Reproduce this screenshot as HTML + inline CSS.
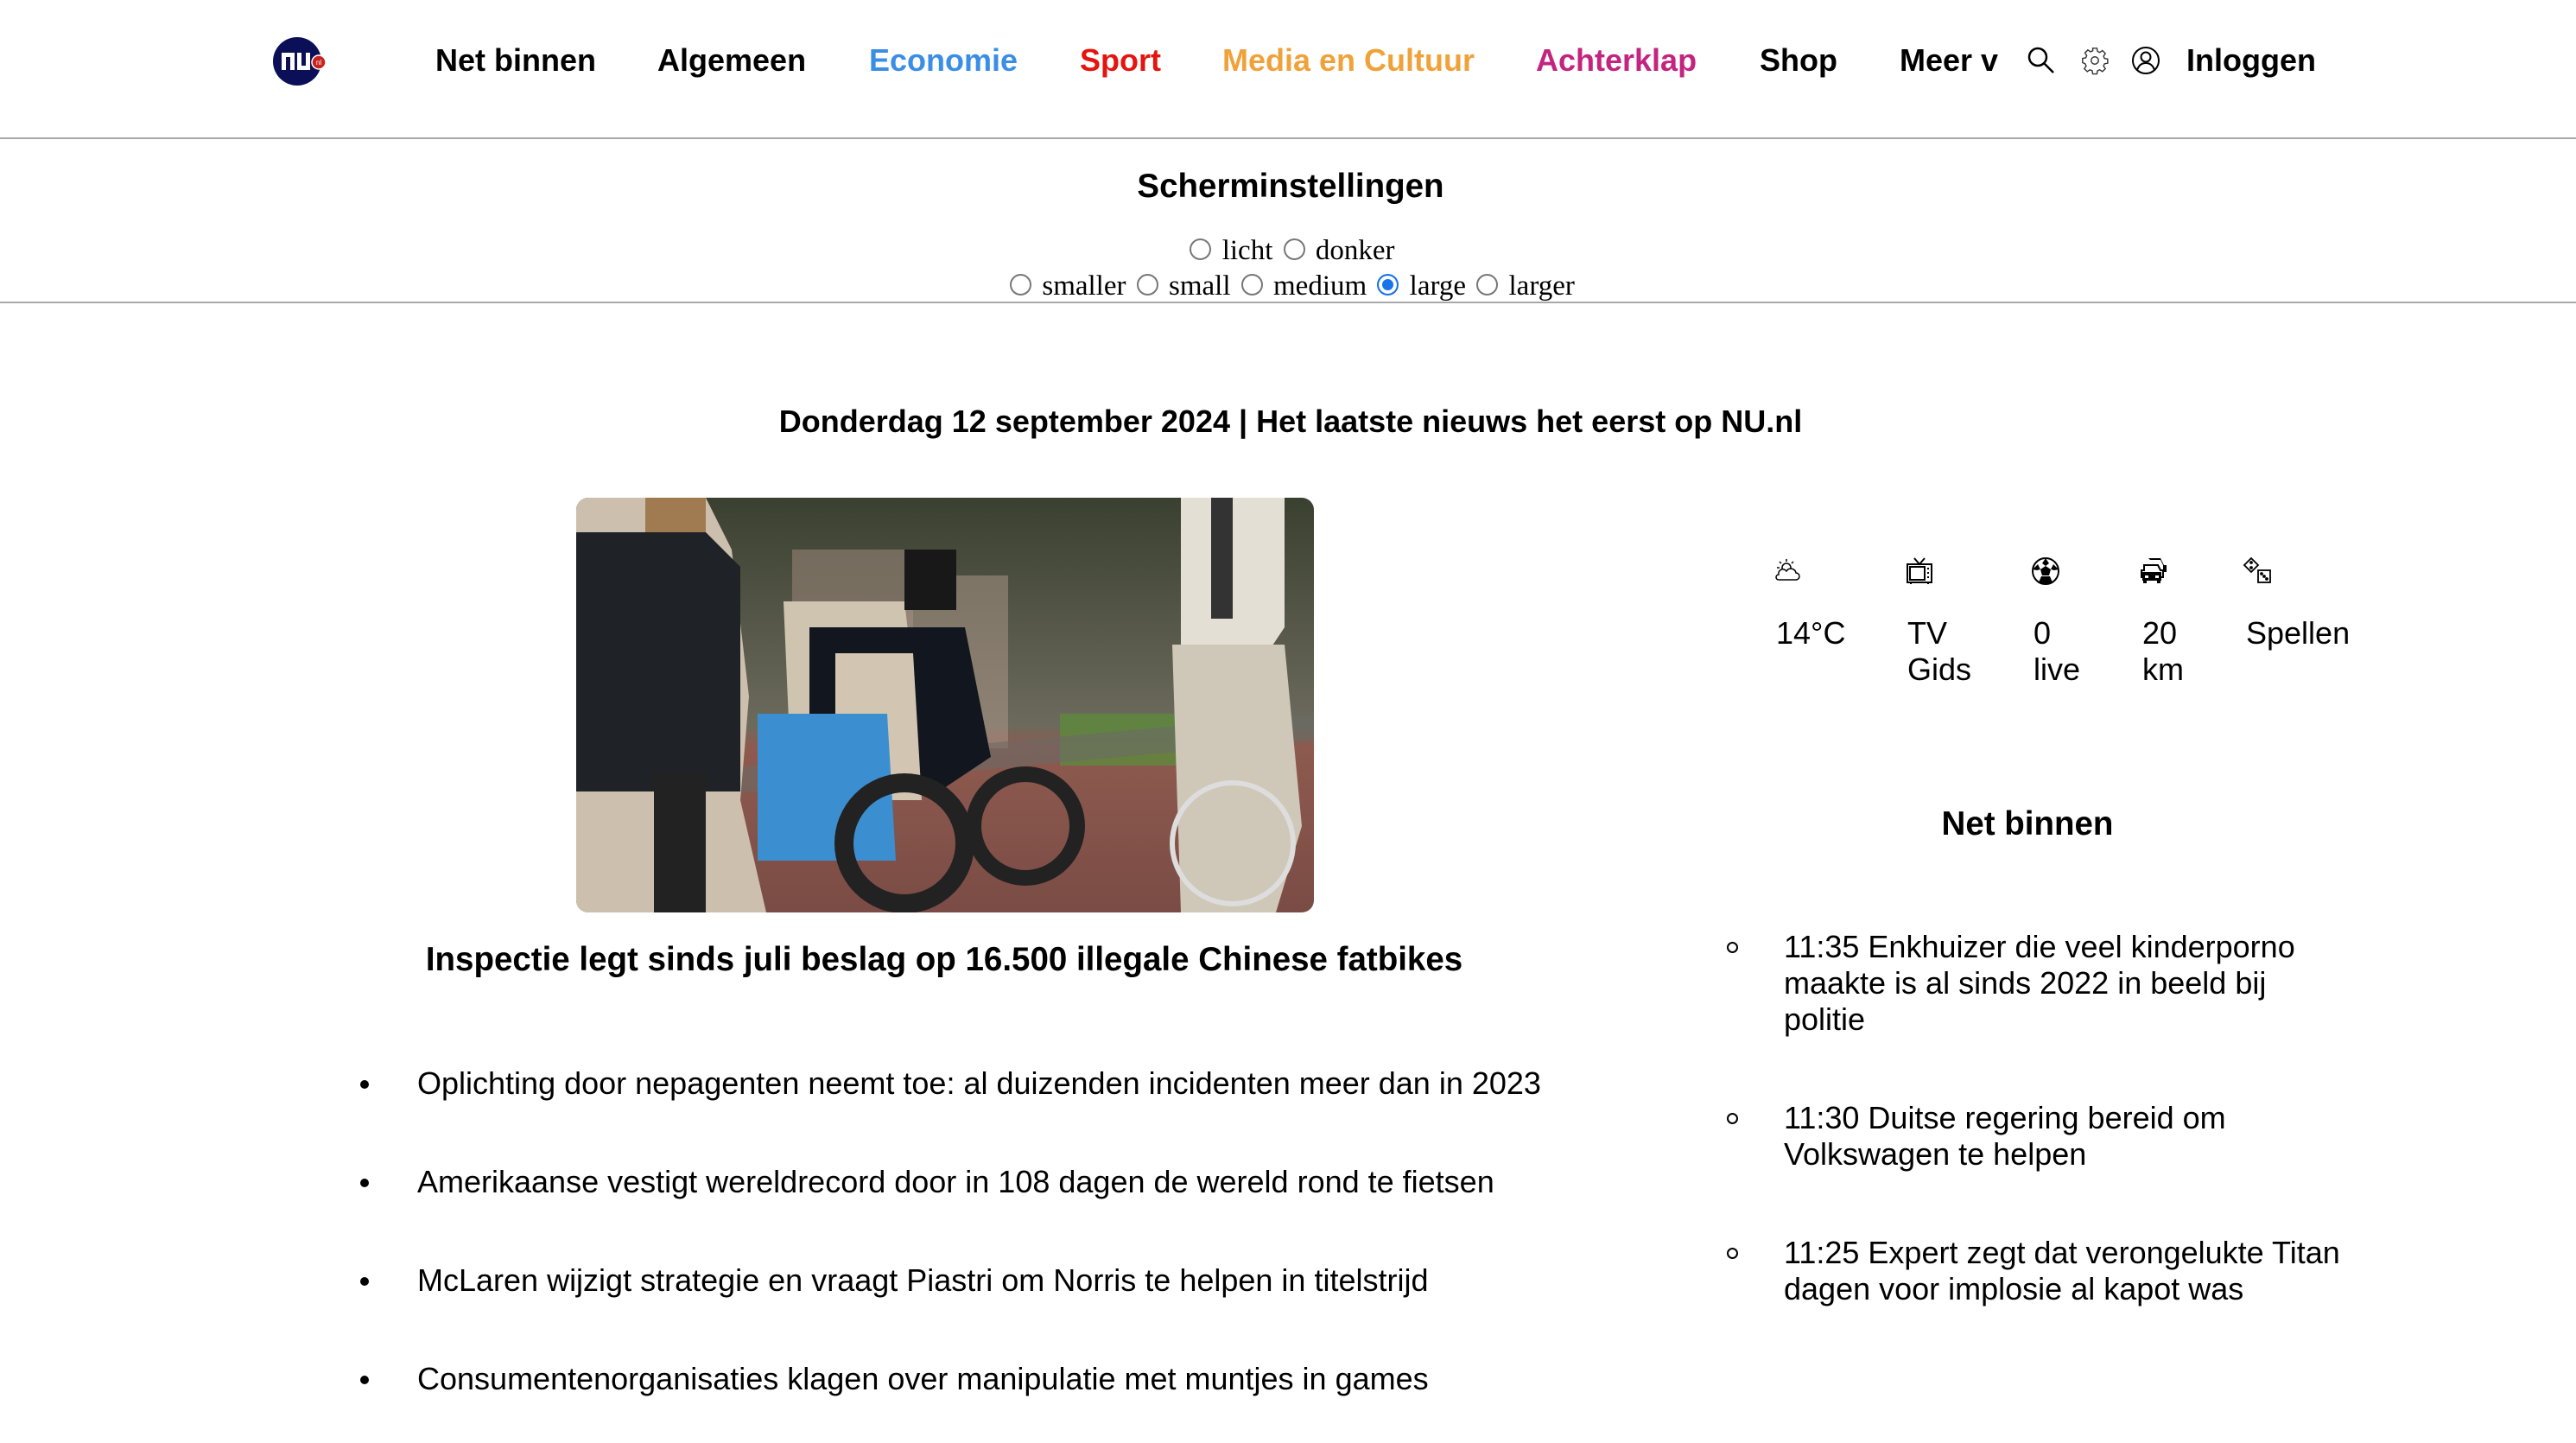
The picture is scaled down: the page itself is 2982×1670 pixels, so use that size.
<!DOCTYPE html>
<html><head><meta charset="utf-8"><style>
*{margin:0;padding:0;box-sizing:border-box}
body{width:2982px;height:1670px;background:#fff;position:relative;font-family:"Liberation Sans",Arial,sans-serif;color:#000;overflow:hidden}
.a{position:absolute;white-space:nowrap}
.nav{font-size:36px;font-weight:bold;top:49px}
.hr{position:absolute;left:0;width:2982px;height:2px;background:#a8a8a8}
.ser{font-family:"Liberation Serif",serif;font-size:33px}
.rd{display:inline-block;width:25px;height:25px;border:2px solid #777;border-radius:50%;vertical-align:-1px;margin:0 4px;background:#fff}
.rd.on{border:2px solid #1a73e8;box-shadow:inset 0 0 0 4px #fff;background:#1a73e8}
.bul{font-size:36px;left:483px}
.dot{position:absolute;left:-66px;top:17px;width:10px;height:10px;border-radius:50%;background:#000}
.w{font-size:36px;line-height:42px;top:712px}
.nb{font-size:36px;line-height:42px;left:2065px;width:660px;white-space:normal}
.circ{position:absolute;left:-66px;top:15px;width:13px;height:13px;border:2px solid #000;border-radius:50%}
</style></head><body>

<svg class="a" style="left:315px;top:42px" width="66" height="58" viewBox="0 0 66 58">
<circle cx="29" cy="29" r="28" fill="#0b0f57"/>
<path d="M11 19h15v20h-5V24h-5v15h-5z M29 19h5v15h5V19h5v20H29z" fill="#fff"/>
<circle cx="54" cy="30" r="8" fill="#c8231e" stroke="#fff" stroke-width="1.5"/>
<text x="54" y="33" font-size="8" fill="#fff" text-anchor="middle" font-family="Liberation Sans">nl</text>
</svg>

<div class="a nav" style="left:504px">Net binnen</div>
<div class="a nav" style="left:761px">Algemeen</div>
<div class="a nav" style="left:1006px;color:#3a8ee6">Economie</div>
<div class="a nav" style="left:1250px;color:#e4140e">Sport</div>
<div class="a nav" style="left:1415px;color:#f0a23a">Media en Cultuur</div>
<div class="a nav" style="left:1778px;color:#c3247f">Achterklap</div>
<div class="a nav" style="left:2037px">Shop</div>
<div class="a nav" style="left:2199px">Meer v</div>
<svg class="a" style="left:2346px;top:53px" width="34" height="34" viewBox="0 0 34 34" fill="none" stroke="#000" stroke-width="2.5"><circle cx="13" cy="13" r="10"/><path d="M20 20l11 11"/></svg>
<svg class="a" style="left:2408px;top:53px" width="34" height="34" viewBox="0 0 24 24" fill="none" stroke="#333" stroke-width="1"><circle cx="12" cy="12" r="3"/><path d="M10.3 2h3.4l.5 2.6 1.8.8 2.2-1.5 2.4 2.4-1.5 2.2.8 1.8 2.6.5v3.4l-2.6.5-.8 1.8 1.5 2.2-2.4 2.4-2.2-1.5-1.8.8-.5 2.6h-3.4l-.5-2.6-1.8-.8-2.2 1.5-2.4-2.4 1.5-2.2-.8-1.8L2 13.7v-3.4l2.6-.5.8-1.8-1.5-2.2 2.4-2.4 2.2 1.5 1.8-.8z"/></svg>
<svg class="a" style="left:2467px;top:53px" width="34" height="34" viewBox="0 0 34 34" fill="none" stroke="#000" stroke-width="2"><circle cx="17" cy="17" r="15"/><circle cx="17" cy="13" r="5.5"/><path d="M7 28c2-6 6-8 10-8s8 2 10 8"/></svg>
<div class="a nav" style="left:2531px">Inloggen</div>

<div class="hr" style="top:159px"></div>
<div class="a" style="left:0;width:2988px;text-align:center;top:194px;font-size:38.5px;font-weight:bold">Scherminstellingen</div>
<div class="a ser" style="left:0;width:2988px;text-align:center;top:272px"><span class="rd"></span> licht <span class="rd"></span> donker</div>
<div class="a ser" style="left:0;width:2988px;text-align:center;top:313px"><span class="rd"></span> smaller <span class="rd"></span> small <span class="rd"></span> medium <span class="rd on"></span> large <span class="rd"></span> larger</div>
<div class="hr" style="top:349px"></div>

<div class="a" style="left:0;width:2988px;text-align:center;top:467px;font-size:36px;font-weight:bold">Donderdag 12 september 2024 | Het laatste nieuws het eerst op NU.nl</div>

<svg class="a" style="left:667px;top:576px;border-radius:14px" width="854" height="480" viewBox="0 0 854 480">
<defs><linearGradient id="bg" x1="0" y1="0" x2="0" y2="1"><stop offset="0" stop-color="#3a4030"/><stop offset=".55" stop-color="#6c6a5c"/><stop offset=".6" stop-color="#8e5a4f"/><stop offset="1" stop-color="#7a4c45"/></linearGradient></defs>
<rect width="854" height="480" fill="url(#bg)"/>
<rect x="250" y="60" width="140" height="200" fill="#8a7a6e" opacity=".7"/>
<rect x="380" y="90" width="120" height="200" fill="#b09a8c" opacity=".5"/>
<rect x="560" y="250" width="150" height="60" fill="#5e8a3c" opacity=".8"/>
<path d="M0 330 L520 280 L854 250 L854 280 L520 310 L0 360z" fill="#6a6a66" opacity=".6"/>
<path d="M0 0h150l30 60 20 170 -10 120 30 130H0z" fill="#cdbfae"/>
<path d="M0 40h150l40 40v260H0z" fill="#1f2226"/>
<path d="M80 0h70v40H80z" fill="#a07a50"/>
<rect x="90" y="320" width="60" height="160" fill="#222"/>
<path d="M240 120h140l20 170-40 60h-110z" fill="#cfc4b0"/>
<path d="M270 150h180l30 150-60 40h-150z" fill="#12161e"/>
<path d="M300 180h90l10 170h-100z" fill="#d2c6b2"/>
<path d="M210 250h150l10 170h-160z" fill="#3b8fd0"/>
<circle cx="380" cy="400" r="70" fill="none" stroke="#222" stroke-width="22"/>
<circle cx="520" cy="380" r="60" fill="none" stroke="#222" stroke-width="18"/>
<path d="M380 60h60v70h-60z" fill="#181818"/>
<path d="M700 0h120v150l-20 30h-100z" fill="#e4dfd4"/>
<path d="M690 170h130l20 210-30 100h-110z" fill="#cfc7b8"/>
<circle cx="760" cy="400" r="70" fill="none" stroke="#ddd" stroke-width="6"/>
<rect x="735" y="0" width="25" height="140" fill="#333"/>
</svg>

<div class="a" style="left:0;width:2186px;text-align:center;top:1089px;font-size:38.5px;font-weight:bold">Inspectie legt sinds juli beslag op 16.500 illegale Chinese fatbikes</div>

<div class="a bul" style="top:1233px"><i class="dot"></i>Oplichting door nepagenten neemt toe: al duizenden incidenten meer dan in 2023</div>
<div class="a bul" style="top:1347px"><i class="dot"></i>Amerikaanse vestigt wereldrecord door in 108 dagen de wereld rond te fietsen</div>
<div class="a bul" style="top:1461px"><i class="dot"></i>McLaren wijzigt strategie en vraagt Piastri om Norris te helpen in titelstrijd</div>
<div class="a bul" style="top:1575px"><i class="dot"></i>Consumentenorganisaties klagen over manipulatie met muntjes in games</div>

<svg class="a" style="left:2054px;top:645px" width="32" height="32" viewBox="0 0 32 32" fill="none" stroke="#000" stroke-width="1.5"><circle cx="14" cy="12" r="5"/><path d="M14 2v3M6 5l2 2M22 5l-2 2M3 12h3M5 26h20a4 4 0 0 0 0-8 6 6 0 0 0-11-2 5 5 0 0 0-9 4 3 3 0 0 0 0 6z" fill="#fff"/></svg>
<svg class="a" style="left:2206px;top:644px" width="32" height="34" viewBox="0 0 32 34" fill="none" stroke="#000" stroke-width="2"><path d="M10 2l6 7 6-7"/><rect x="2" y="9" width="28" height="21"/><rect x="5" y="12" width="17" height="15"/><path d="M26 13v2M26 18v2M26 23v2M6 32v-2M26 32v-2"/></svg>
<svg class="a" style="left:2351px;top:644px" width="34" height="34" viewBox="0 0 34 34"><circle cx="17" cy="17" r="15" fill="#fff" stroke="#000" stroke-width="2"/><path d="M17 11l6 4-2 7h-8l-2-7z M17 2l-4 6 4 3 4-3z M2 15l5 1 4-1-3-6z M32 15l-5 1-4-1 3-6z M9 30l3-7h10l3 7-8 2z" fill="#000"/></svg>
<svg class="a" style="left:2477px;top:644px" width="34" height="34" viewBox="0 0 34 34" fill="#000"><path d="M10 2h14l4 8h3v8H27V10l-3-6H12z"/><path d="M5 10h16l3 6h3v8H2v-8h3z" fill="#fff" stroke="#000" stroke-width="2"/><path d="M3 18h22v10H3z"/><rect x="6" y="22" width="4" height="3" fill="#fff"/><rect x="18" y="22" width="4" height="3" fill="#fff"/><path d="M4 28h4v3H4zM20 28h4v3h-4z"/></svg>
<svg class="a" style="left:2596px;top:644px" width="36" height="34" viewBox="0 0 36 34" fill="none" stroke="#000" stroke-width="1.8"><path d="M10 2l8 8-8 8-8-8z"/><rect x="18" y="16" width="14" height="14"/><circle cx="10" cy="7" r="1" fill="#000"/><circle cx="10" cy="13" r="1" fill="#000"/><circle cx="22" cy="20" r="1" fill="#000"/><circle cx="28" cy="26" r="1" fill="#000"/><circle cx="25" cy="23" r="1" fill="#000"/></svg>

<div class="a w" style="left:2056px">14°C</div>
<div class="a w" style="left:2208px">TV<br>Gids</div>
<div class="a w" style="left:2354px">0<br>live</div>
<div class="a w" style="left:2480px">20<br>km</div>
<div class="a w" style="left:2600px">Spellen</div>

<div class="a" style="left:2047px;width:600px;text-align:center;top:932px;font-size:38.5px;font-weight:bold">Net binnen</div>

<div class="a nb" style="top:1075px"><i class="circ"></i>11:35 Enkhuizer die veel kinderporno maakte is al sinds 2022 in beeld bij politie</div>
<div class="a nb" style="top:1273px"><i class="circ"></i>11:30 Duitse regering bereid om Volkswagen te helpen</div>
<div class="a nb" style="top:1429px"><i class="circ"></i>11:25 Expert zegt dat verongelukte Titan dagen voor implosie al kapot was</div>
</body></html>
